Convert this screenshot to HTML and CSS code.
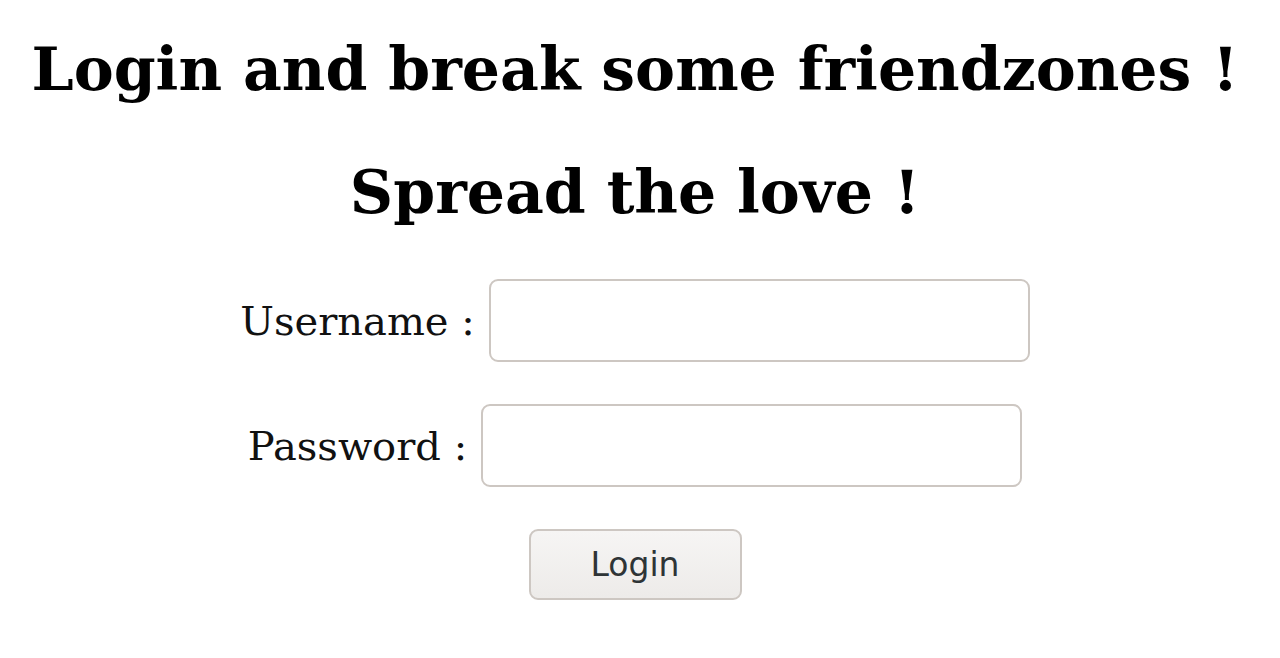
FILE: index.html
```html
<!DOCTYPE html>
<html>
<head>
<meta charset="utf-8">
<link rel="stylesheet" href="styles.css">
</head>
<body>
<div class="page">
  <h2 class="title">Login and break some friendzones !</h2>
  <h2 class="title second">Spread the love !</h2>
  <form class="form">
    <div class="row row-user">
      <label class="label" for="u">Username :</label>
      <input class="field" id="u" type="text">
    </div>
    <div class="row row-pass">
      <label class="label" for="p">Password :</label>
      <input class="field" id="p" type="password">
    </div>
    <button class="btn" type="button">Login</button>
  </form>
</div>
</body>
</html>
```
FILE: styles.css
```css
html, body {
  margin: 0;
  padding: 0;
  background: #ffffff;
}
.page {
  width: 1270px;
  padding-top: 34px;
  display: flex;
  flex-direction: column;
  align-items: center;
  font-family: "DejaVu Serif", serif;
}
.title {
  margin: 0;
  font-size: 60px;
  line-height: 70px;
  font-weight: bold;
  color: #000;
  text-align: center;
  white-space: nowrap;
}
.second {
  margin-top: 53px;
}
.form {
  margin-top: 52px;
  display: flex;
  flex-direction: column;
  align-items: center;
  gap: 42px;
}
.row {
  display: flex;
  align-items: center;
  gap: 14px;
}
.label {
  font-size: 40px;
  color: #111;
  line-height: normal;
}
.field {
  box-sizing: border-box;
  width: 541px;
  height: 83px;
  margin: 0;
  border: 2px solid #cdc7c2;
  border-radius: 9px;
  background: #fff;
  outline: none;
}
.btn {
  box-sizing: border-box;
  width: 213px;
  height: 71px;
  margin: 0;
  border: 2px solid #cdc7c2;
  border-radius: 9px;
  background: linear-gradient(#f6f5f4, #edebe9);
  font-family: "DejaVu Sans", sans-serif;
  font-size: 33px;
  color: #2e3436;
  padding: 0;
}
```
